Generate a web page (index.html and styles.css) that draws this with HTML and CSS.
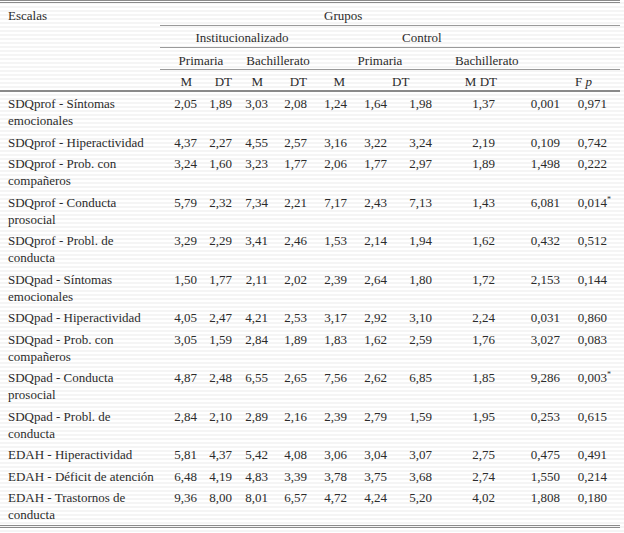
FILE: index.html
```html
<!DOCTYPE html>
<html lang="es">
<head>
<meta charset="utf-8">
<title>Escalas por grupos</title>
<link rel="stylesheet" href="styles.css">
</head>
<body>
<table class="results">
  <colgroup>
    <col class="c-scale"><col class="c1"><col class="c2"><col class="c3"><col class="c4"><col class="c5"><col class="c6"><col class="c7"><col class="c8"><col class="c9"><col class="c10">
  </colgroup>
  <thead>
    <tr class="h1">
      <th rowspan="4" class="scale-head">Escalas</th>
      <th colspan="10" class="groups">Grupos</th>
    </tr>
    <tr class="h2">
      <th colspan="4" class="inst">Institucionalizado</th>
      <th colspan="6" class="ctrl">Control</th>
    </tr>
    <tr class="h3">
      <th colspan="2" class="inst-prim">Primaria</th>
      <th colspan="2" class="inst-bach">Bachillerato</th>
      <th colspan="3" class="ctrl-prim">Primaria</th>
      <th colspan="3" class="ctrl-bach">Bachillerato</th>
    </tr>
    <tr class="h4">
      <th class="m1">M</th>
      <th class="dt1">DT</th>
      <th class="m2">M</th>
      <th class="dt2">DT</th>
      <th class="m3">M</th>
      <th colspan="2" class="dt3">DT</th>
      <th class="mdt">M DT</th>
      <th colspan="2" class="fp">F <i>p</i></th>
    </tr>
  </thead>
  <tbody>
    <tr><td>SDQprof - Síntomas emocionales</td><td>2,05</td><td>1,89</td><td>3,03</td><td>2,08</td><td>1,24</td><td>1,64</td><td>1,98</td><td>1,37</td><td>0,001</td><td>0,971</td></tr>
    <tr><td>SDQprof - Hiperactividad</td><td>4,37</td><td>2,27</td><td>4,55</td><td>2,57</td><td>3,16</td><td>3,22</td><td>3,24</td><td>2,19</td><td>0,109</td><td>0,742</td></tr>
    <tr><td>SDQprof - Prob. con compañeros</td><td>3,24</td><td>1,60</td><td>3,23</td><td>1,77</td><td>2,06</td><td>1,77</td><td>2,97</td><td>1,89</td><td>1,498</td><td>0,222</td></tr>
    <tr><td>SDQprof - Conducta prosocial</td><td>5,79</td><td>2,32</td><td>7,34</td><td>2,21</td><td>7,17</td><td>2,43</td><td>7,13</td><td>1,43</td><td>6,081</td><td>0,014<sup class="sig">*</sup></td></tr>
    <tr><td>SDQprof - Probl. de conducta</td><td>3,29</td><td>2,29</td><td>3,41</td><td>2,46</td><td>1,53</td><td>2,14</td><td>1,94</td><td>1,62</td><td>0,432</td><td>0,512</td></tr>
    <tr><td>SDQpad - Síntomas emocionales</td><td>1,50</td><td>1,77</td><td>2,11</td><td>2,02</td><td>2,39</td><td>2,64</td><td>1,80</td><td>1,72</td><td>2,153</td><td>0,144</td></tr>
    <tr><td>SDQpad - Hiperactividad</td><td>4,05</td><td>2,47</td><td>4,21</td><td>2,53</td><td>3,17</td><td>2,92</td><td>3,10</td><td>2,24</td><td>0,031</td><td>0,860</td></tr>
    <tr><td>SDQpad - Prob. con compañeros</td><td>3,05</td><td>1,59</td><td>2,84</td><td>1,89</td><td>1,83</td><td>1,62</td><td>2,59</td><td>1,76</td><td>3,027</td><td>0,083</td></tr>
    <tr><td>SDQpad - Conducta prosocial</td><td>4,87</td><td>2,48</td><td>6,55</td><td>2,65</td><td>7,56</td><td>2,62</td><td>6,85</td><td>1,85</td><td>9,286</td><td>0,003<sup class="sig">*</sup></td></tr>
    <tr><td>SDQpad - Probl. de conducta</td><td>2,84</td><td>2,10</td><td>2,89</td><td>2,16</td><td>2,39</td><td>2,79</td><td>1,59</td><td>1,95</td><td>0,253</td><td>0,615</td></tr>
    <tr><td>EDAH - Hiperactividad</td><td>5,81</td><td>4,37</td><td>5,42</td><td>4,08</td><td>3,06</td><td>3,04</td><td>3,07</td><td>2,75</td><td>0,475</td><td>0,491</td></tr>
    <tr><td>EDAH - Déficit de atención</td><td>6,48</td><td>4,19</td><td>4,83</td><td>3,39</td><td>3,78</td><td>3,75</td><td>3,68</td><td>2,74</td><td>1,550</td><td>0,214</td></tr>
    <tr><td>EDAH - Trastornos de conducta</td><td>9,36</td><td>8,00</td><td>8,01</td><td>6,57</td><td>4,72</td><td>4,24</td><td>5,20</td><td>4,02</td><td>1,808</td><td>0,180</td></tr>
  </tbody>
</table>
</body>
</html>
```

FILE: styles.css
```css
html, body {
  margin: 0;
  padding: 0;
}

body {
  background: repeating-linear-gradient(to bottom, #ffffff 0, #ffffff 2px, #f5f5f5 2px, #f5f5f5 4px);
  color: #2b2b2b;
  font-family: "Liberation Serif", "DejaVu Serif", serif;
  font-size: 13px;
  line-height: 17px;
}

.results {
  width: 620px;
  table-layout: fixed;
  border-collapse: separate;
  border-spacing: 0;
  border-top: 3px double #8a8a8a;
  border-bottom: 3px double #8a8a8a;
  font-family: "Liberation Serif", "DejaVu Serif", serif;
}

.c-scale { width: 160px; }
.c1 { width: 40px; }
.c2 { width: 36px; }
.c3 { width: 36px; }
.c4 { width: 40px; }
.c5 { width: 40px; }
.c6 { width: 40px; }
.c7 { width: 48px; }
.c8 { width: 60px; }
.c9 { width: 65px; }
.c10 { width: 55px; }

th {
  font-weight: normal;
  padding: 0;
  white-space: nowrap;
}

/* header rows */
.h1 th { padding-top: 4px; padding-bottom: 1px; }
.h2 th { padding-top: 3px; padding-bottom: 1px; }
.h3 th { padding-top: 4px; padding-bottom: 0; }
.h4 th { padding-top: 3px; padding-bottom: 0; }

.h1 .groups,
.h2 th,
.h3 th {
  border-bottom: 1px solid #9a9a9a;
}

.scale-head,
.h4 th {
  border-bottom: 2px solid #8a8a8a;
}

.scale-head {
  text-align: left;
  vertical-align: top;
  padding-left: 8px;
}

.groups { text-align: left; padding-left: 164px; }
.inst { text-align: center; padding-left: 12px; }
.ctrl { text-align: left; padding-left: 90px; }
.inst-prim { text-align: center; padding-left: 6px; }
.inst-bach { text-align: center; padding-left: 8px; }
.ctrl-prim { text-align: center; padding-left: 8px; }
.ctrl-bach { text-align: left; padding-left: 15px; }

.m1 { text-align: right; padding-right: 8px; }
.dt1 { text-align: right; padding-right: 4px; }
.m2 { text-align: right; padding-right: 9px; }
.dt2 { text-align: right; padding-right: 5px; }
.m3 { text-align: right; padding-right: 7px; }
.dt3 { text-align: left; padding-left: 40px; }
.mdt { text-align: right; padding-right: 3px; }
.fp { text-align: left; padding-left: 75px; }
.fp i { font-style: italic; }

/* body rows */
tbody td {
  padding: 3px 5px 1.5px 0;
  vertical-align: top;
  text-align: right;
  white-space: nowrap;
}

tbody td:first-child {
  text-align: left;
  white-space: normal;
  padding-left: 8px;
  padding-right: 6px;
}

tbody td:nth-child(2) { padding-right: 3px; }
tbody td:nth-child(3) { padding-right: 4px; }
tbody td:nth-child(4) { padding-right: 4px; }
tbody td:nth-child(8) { padding-right: 8px; }
tbody td:nth-child(11) { padding-right: 13px; }

.sig {
  font-size: 8px;
  line-height: 0;
  vertical-align: 5px;
  margin-right: -4px;
}
```
